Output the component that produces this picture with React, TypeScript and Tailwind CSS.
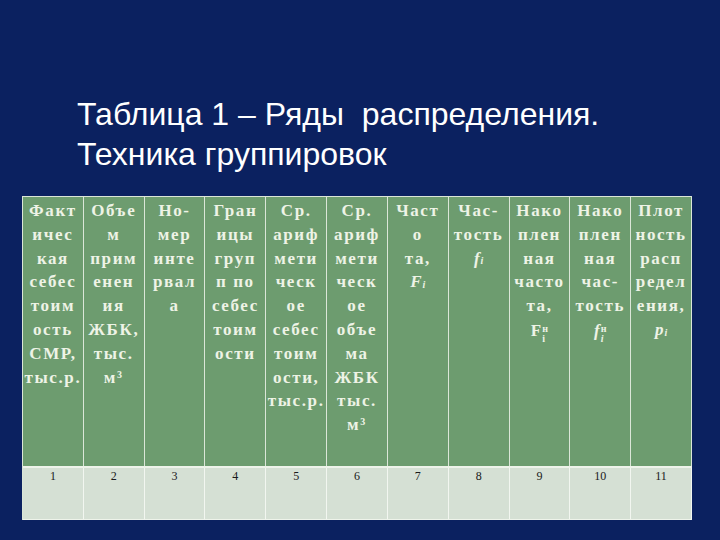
import React from 'react';

type Line = React.ReactNode;

// F/f with index: superscript stacked over subscript
function Idx({ base, sup, italic }: { base: string; sup?: string; italic?: boolean }) {
  return (
    <span className="inline-flex items-center tracking-normal">
      <span className={italic ? 'italic' : ''}>{base}</span>
      <span className="inline-flex flex-col text-[10px] leading-[10px] ml-[1px] pt-[6px]">
        {sup && <span>{sup}</span>}
        <span className={italic ? 'italic' : ''}>i</span>
      </span>
    </span>
  );
}

const m3 = <>м<sup className="text-[10px]">3</sup></>;

const cols: Line[][] = [
  ['Факт', 'ичес', 'кая', 'себес', 'тоим', 'ость', 'СМР,', 'тыс.р.'],
  ['Объе', 'м', 'прим', 'енен', 'ия', 'ЖБК,', 'тыс.', m3],
  ['Но-', 'мер', 'инте', 'рвал', 'а'],
  ['Гран', 'ицы', 'груп', 'п по', 'себес', 'тоим', 'ости'],
  ['Ср.', 'ариф', 'мети', 'ческ', 'ое', 'себес', 'тоим', 'ости,', 'тыс.р.'],
  ['Ср.', 'ариф', 'мети', 'ческ', 'ое', 'объе', 'ма', 'ЖБК', 'тыс.', m3],
  ['Част', 'о', 'та,', <Idx base="F" italic />],
  ['Час-', 'тость', <Idx base="f" italic />],
  ['Нако', 'плен', 'ная', 'часто', 'та,', <Idx base="F" sup="н" />],
  ['Нако', 'плен', 'ная', 'час-', 'тость', <Idx base="f" sup="н" italic />],
  ['Плот', 'ность', 'расп', 'редел', 'ения,', <Idx base="p" italic />],
];

export default function App() {
  return (
    <div className="w-[720px] h-[540px] bg-[#0b2160] overflow-hidden flex flex-col">
      <div className="pt-[94px] pl-[77px] h-[196px] text-white text-[32px] leading-[40px] font-['Liberation_Sans',sans-serif]">
        <div>Таблица 1 – Ряды&nbsp; распределения.</div>
        <div>Техника группировок</div>
      </div>
      <div className="ml-[22px] w-[670px] border-t border-l border-[#dbe6d8]">
        <div className="grid grid-cols-11 h-[269px] bg-[#6d9c6f]">
          {cols.map((lines, i) => (
            <div
              key={i}
              className="border-r border-[#dbe6d8] pt-[2px] flex flex-col items-center text-[#eef3e6] font-bold text-[17px] leading-[23.8px] tracking-[1.6px] font-['Liberation_Serif',serif] whitespace-nowrap"
            >
              {lines.map((l, j) => (
                <div key={j} className="h-[23.8px]">{l}</div>
              ))}
            </div>
          ))}
        </div>
        <div className="grid grid-cols-11 h-[54px] bg-[#d5e0d4] border-t-2 border-[#eef3ea] border-b">
          {Array.from({ length: 11 }, (_, i) => (
            <div
              key={i}
              className="border-r border-[#f2f6f0] flex justify-center text-[12px] leading-[16px] text-[#1a1a1a] font-['Liberation_Serif',serif]"
            >
              {i + 1}
            </div>
          ))}
        </div>
      </div>
    </div>
  );
}
